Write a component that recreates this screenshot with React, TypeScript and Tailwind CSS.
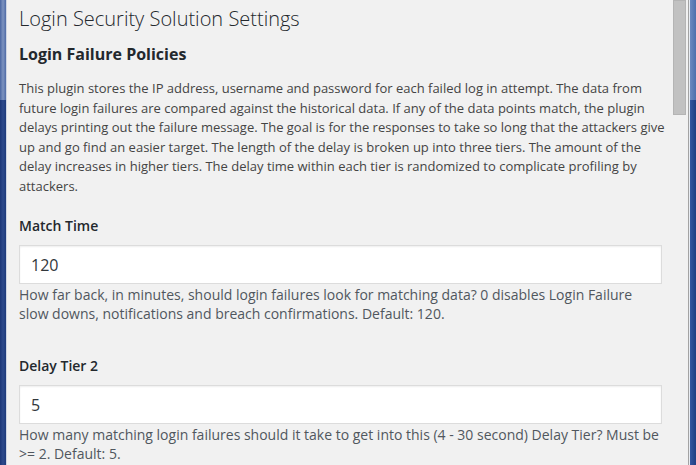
const paragraph =
  "This plugin stores the IP address, username and password for each failed log in attempt. The data from future login failures are compared against the historical data. If any of the data points match, the plugin delays printing out the failure message. The goal is for the responses to take so long that the attackers give up and go find an easier target. The length of the delay is broken up into three tiers. The amount of the delay increases in higher tiers. The delay time within each tier is randomized to complicate profiling by attackers.";

const fields = [
  {
    label: "Match Time",
    value: "120",
    help: "How far back, in minutes, should login failures look for matching data? 0 disables Login Failure slow downs, notifications and breach confirmations. Default: 120.",
  },
  {
    label: "Delay Tier 2",
    value: "5",
    help: "How many matching login failures should it take to get into this (4 - 30 second) Delay Tier? Must be >= 2. Default: 5.",
  },
];

function Field({ label, value, help }: { label: string; value: string; help: string }) {
  return (
    <div className="mb-[33px]">
      <label className="block text-[14px] leading-[20px] font-semibold text-[#23282d]">
        {label}
      </label>
      <div className="mt-[9px] w-[643px]">
        <input
          type="text"
          defaultValue={value}
          className="block h-[39px] w-full border border-[#dcdcdc] bg-white px-[11px] text-[16px] text-[#32373c] shadow-[inset_0_1px_2px_rgba(0,0,0,0.07)] outline-none"
        />
        <p className="mt-[1px] pr-[2px] text-[14px] leading-[19px] text-[#50575e]">{help}</p>
      </div>
    </div>
  );
}

export default function App() {
  return (
    <div
      className="flex h-[465px] w-[696px] overflow-hidden bg-[#f1f1f1]"
      style={{ fontFamily: '"Open Sans", "Noto Sans", sans-serif' }}
    >
      {/* left window frame */}
      <div className="flex w-[7px] shrink-0 flex-col border-r border-[#cfd6e4]">
        <div className="h-[100px] bg-gradient-to-r from-[#4a66a2] via-[#7d93c0] to-[#4f6ba6]" />
        <div className="flex-1 bg-gradient-to-r from-[#1b3677] via-[#2d4a8c] to-[#1d3a7b]" />
      </div>

      {/* page content */}
      <div className="min-w-0 flex-1 overflow-hidden pl-[12px] pr-[5px]">
        <h1 className="pt-[4px] text-[20px] leading-[29px] font-light text-[#23282d]">
          Login Security Solution Settings
        </h1>
        <h2 className="mt-[10px] text-[16px] leading-[22px] font-bold text-[#23282d]">
          Login Failure Policies
        </h2>
        <p className="mt-[14px] text-[13px] leading-[19.5px] text-[#444]">{paragraph}</p>
        <div className="mt-[20px]">
          {fields.map((f) => (
            <Field key={f.label} {...f} />
          ))}
        </div>
      </div>

      {/* scrollbar */}
      <div className="w-[15px] shrink-0 pr-[2px]">
        <div className="h-[115px] w-[13px] border border-[#b4b4b4] bg-[#c1c1c1]" />
      </div>

      {/* right window frame */}
      <div className="flex w-[8px] shrink-0">
        <div className="w-px bg-[#a3a3a3]" />
        <div className="w-px bg-[#e8ecf2]" />
        <div className="flex flex-1 flex-col">
          <div className="h-[100px] bg-gradient-to-r from-[#6d89c0] to-[#4f6fac]" />
          <div className="flex-1 bg-gradient-to-r from-[#3557a0] to-[#203f82]" />
        </div>
      </div>
    </div>
  );
}
